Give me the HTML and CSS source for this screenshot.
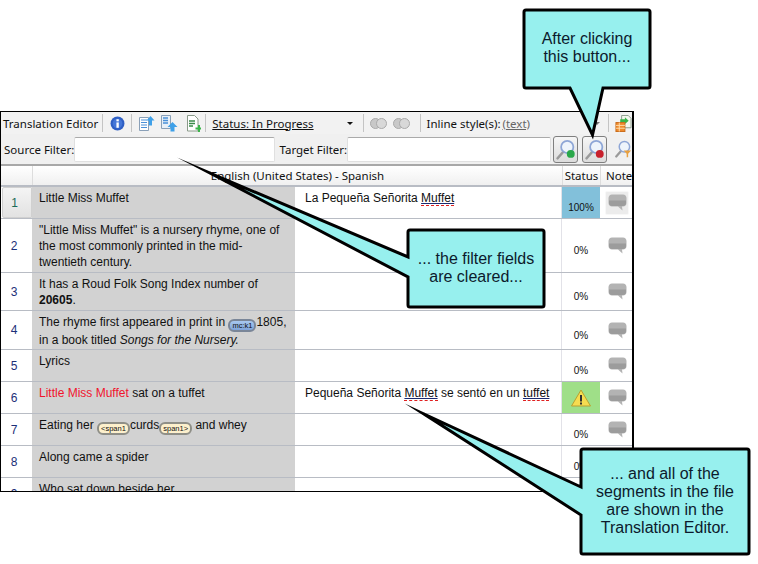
FILE: index.html
```html
<!DOCTYPE html>
<html lang="en">
<head>
<meta charset="utf-8">
<title>Translation Editor</title>
<link rel="stylesheet" href="styles.css">
</head>
<body>
<svg class="defs" width="0" height="0">
  <defs>
    <symbol id="bubble" viewBox="0 0 19 17">
      <path d="M4 0.5h11c2 0 3.5 1.6 3.5 3.6v4.8c0 2-1.5 3.6-3.5 3.6h-1l0.5 4-4.5-4H4c-2 0-3.5-1.6-3.5-3.6V4.1C0.500 2.100 2 0.500 4 0.500z" fill="#b3b3b3"/>
      <path d="M1 6.500h17v2.500c0 2-1.500 3-3 3H4c-1.500 0-3-1-3-3z" fill="#9c9c9c"/>
    </symbol>
    <symbol id="lens" viewBox="0 0 24 24">
      <path d="M3 22l7-8" stroke="#9a9a9a" stroke-width="3" stroke-linecap="round"/>
      <circle cx="14" cy="9" r="7" fill="#eef4fb" stroke="#8ea6d6" stroke-width="2"/>
    </symbol>
  </defs>
</svg>
<main class="stage">
  <section class="window">
    <div class="toolbar">
      <span class="tool-title">Translation Editor</span>
      <span class="sep"></span>
      <svg class="ic info" viewBox="0 0 14 14"><circle cx="7" cy="7" r="6.500" fill="#2f5fc4"/><circle cx="7" cy="7" r="4.500" fill="#4476d8"/><rect x="6" y="6" width="2.200" height="5" fill="#fff"/><rect x="6" y="3" width="2.200" height="2" fill="#fff"/></svg>
      <span class="sep"></span>
      <svg class="ic page a" viewBox="0 0 17 17"><path d="M1.500 2.500h9v13h-9z" fill="#fff" stroke="#8aa0b8"/><path d="M3 5h6M3 7.500h6M3 10h6M3 12.500h6" stroke="#4a90d8"/><path d="M12.500 1l4 4.500h-2.500v5h-3v-5H8.500z" fill="#3fa0e8"/></svg>
      <svg class="ic page b" viewBox="0 0 17 17"><path d="M0.500 0.500h9v13h-9z" fill="#e8f0f8" stroke="#8aa0b8"/><path d="M2 3h5M2 5.500h5M2 8h5" stroke="#4a90d8" stroke-width="1.300"/><path d="M11.500 7l5 5h-3v4.500h-4V12h-3z" fill="#3fa0e8"/></svg>
      <svg class="ic page c" viewBox="0 0 15 17"><path d="M1.500 0.500h7l3.500 3.500v12h-10.500z" fill="#fff" stroke="#8a9a8a"/><path d="M3 6h6M3 8.500h6M3 11h4" stroke="#3a8a4a" stroke-width="1.300"/><path d="M9.500 12.500h2.500v-2.500h2v2.500h1v2h-1v2.500h-2v-2.500H9.500z" fill="#3bb54a"/></svg>
      <span class="sep"></span>
      <span class="status-link">Status: In Progress</span>
      <span class="caret"></span>
      <span class="sep"></span>
      <span class="rings first"><i></i><i></i></span>
      <span class="rings"><i></i><i></i></span>
      <span class="sep"></span>
      <span class="inline-label">Inline style(s):</span>
      <span class="inline-value">(text)</span>
      <span class="caret faint"></span>
      <span class="sep"></span>
      <svg class="ic page d" viewBox="0 0 17 18"><path d="M6.500 0.500h7l3 3v10h-10z" fill="#f4f8f0" stroke="#8a9a8a"/><path d="M5 4.500h5v-2l4 3.500-4 3.500v-2H5z" fill="#3bb54a"/><rect x="0.500" y="8" width="9.500" height="9.500" fill="#f08a2c" stroke="#c86a18"/><path d="M0.500 11h9.500M0.500 14h9.500M4 8v9.500" stroke="#ffe0b0"/></svg>
    </div>
    <div class="filters">
      <label class="filter-label source">Source Filter:</label>
      <span class="field f-source"></span>
      <label class="filter-label target">Target Filter:</label>
      <span class="field f-target"></span>
      <button class="lens-btn"><svg class="lens" viewBox="0 0 24 24"><use href="#lens"/><circle cx="18" cy="17" r="4.500" fill="#2aa84a"/></svg></button>
      <button class="lens-btn second"><svg class="lens" viewBox="0 0 24 24"><use href="#lens"/><circle cx="18" cy="17" r="4.500" fill="#c8202c"/></svg></button>
      <svg class="lens plain" viewBox="0 0 24 24"><use href="#lens"/><path d="M13 14h10l-4 4.500v4.500h-2v-4.500z" fill="#e8a040"/></svg>
    </div>
    <div class="grid">
      <div class="row head">
        <div class="c-num"></div>
        <div class="c-lang">English (United States) - Spanish</div>
        <div class="c-status">Status</div>
        <div class="c-note">Note</div>
      </div>
      <div class="row h32">
        <div class="c-num current">1</div>
        <div class="c-src">Little Miss Muffet</div>
        <div class="c-tgt">La Pequeña Señorita <span class="spell">Muffet</span></div>
        <div class="c-pct blue">100%</div>
        <div class="c-bub"><span class="bub-box"><svg class="bub"><use href="#bubble"/></svg></span></div>
      </div>
      <div class="row h54">
        <div class="c-num">2</div>
        <div class="c-src">"Little Miss Muffet" is a nursery rhyme, one of the most commonly printed in the mid-twentieth century.</div>
        <div class="c-tgt"></div>
        <div class="c-pct">0%</div>
        <div class="c-bub"><svg class="bub"><use href="#bubble"/></svg></div>
      </div>
      <div class="row h38">
        <div class="c-num">3</div>
        <div class="c-src">It has a Roud Folk Song Index number of <b>20605</b>.</div>
        <div class="c-tgt"></div>
        <div class="c-pct">0%</div>
        <div class="c-bub"><svg class="bub"><use href="#bubble"/></svg></div>
      </div>
      <div class="row h39">
        <div class="c-num">4</div>
        <div class="c-src">The rhyme first appeared in print in <span class="tag mc">mc:k1</span>1805, in a book titled <i>Songs for the Nursery.</i></div>
        <div class="c-tgt"></div>
        <div class="c-pct">0%</div>
        <div class="c-bub"><svg class="bub"><use href="#bubble"/></svg></div>
      </div>
      <div class="row h32">
        <div class="c-num">5</div>
        <div class="c-src">Lyrics</div>
        <div class="c-tgt"></div>
        <div class="c-pct">0%</div>
        <div class="c-bub"><svg class="bub"><use href="#bubble"/></svg></div>
      </div>
      <div class="row h32">
        <div class="c-num">6</div>
        <div class="c-src"><span class="red">Little Miss Muffet</span> sat on a tuffet</div>
        <div class="c-tgt">Pequeña Señorita <span class="spell">Muffet</span> se sentó en un <span class="spell">tuffet</span></div>
        <div class="c-pct green"><svg class="warn" viewBox="0 0 20 18"><path d="M10 1L19.500 17H0.500z" fill="#f6dc50" stroke="#b8a030"/><rect x="9" y="6" width="2" height="6.500" fill="#333"/><rect x="9" y="13.500" width="2" height="2" fill="#333"/></svg></div>
        <div class="c-bub"><svg class="bub"><use href="#bubble"/></svg></div>
      </div>
      <div class="row h32">
        <div class="c-num">7</div>
        <div class="c-src">Eating her <span class="tag span">&lt;span1</span>curds<span class="tag span">span1&gt;</span> and whey</div>
        <div class="c-tgt"></div>
        <div class="c-pct">0%</div>
        <div class="c-bub"><svg class="bub"><use href="#bubble"/></svg></div>
      </div>
      <div class="row h32">
        <div class="c-num">8</div>
        <div class="c-src">Along came a spider</div>
        <div class="c-tgt"></div>
        <div class="c-pct">0%</div>
        <div class="c-bub"></div>
      </div>
      <div class="row h32">
        <div class="c-num">9</div>
        <div class="c-src">Who sat down beside her</div>
        <div class="c-tgt"></div>
        <div class="c-pct">0%</div>
        <div class="c-bub"></div>
      </div>
    </div>
  </section>

  <svg class="callouts" viewBox="0 0 758 564" width="758" height="564">
    <path class="shape" d="M526 10H648a2 2 0 0 1 2 2V86a2 2 0 0 1-2 2H603L592.500 135 570 88H526a2 2 0 0 1-2-2V12a2 2 0 0 1 2-2z"/>
    <path class="shape" d="M410 230H542a2 2 0 0 1 2 2V305a2 2 0 0 1-2 2H410a2 2 0 0 1-2-2V277L210 173 408 257V232a2 2 0 0 1 2-2z"/>
    <path class="shape" d="M583 449H747a2 2 0 0 1 2 2V552a2 2 0 0 1-2 2H583a2 2 0 0 1-2-2V515L424 414 581 487V451a2 2 0 0 1 2-2z"/>
  </svg>
  <p class="note n1">After clicking<br>this button...</p>
  <p class="note n2">... the filter fields<br>are cleared...</p>
  <p class="note n3">... and all of the<br>segments in the file<br>are shown in the<br>Translation Editor.</p>
</main>
</body>
</html>
```
FILE: styles.css
```css
* { box-sizing: border-box; }
html, body { margin: 0; padding: 0; background: #fff; }
.defs { position: absolute; }
.stage { position: relative; width: 758px; height: 564px; overflow: hidden; font-family: "Liberation Sans", Arial, sans-serif; }

.window {
  position: absolute; left: 0; top: 111px; width: 634px; height: 381px;
  border: 1px solid #000; border-left-width: 1px; border-right-width: 2px;
  background: #fff; overflow: hidden;
}

.toolbar {
  display: flex; align-items: center; height: 22px; padding-left: 2px;
  background: #f2f2f2;
  font-family: "Noto Sans", sans-serif; font-size: 11.500px; color: #111;
}
.tool-title { width: 96px; white-space: nowrap; }
.sep { width: 1px; height: 18px; background: #c4c4c4; margin: 0 6px 0 4px; flex: none; }
.ic { display: block; flex: none; }
.info { width: 15px; height: 15px; margin: 0 2px 0 1px; }
.page { width: 17px; height: 17px; }
.page.a { margin-right: 6px; }
.page.b { margin-right: 8px; }
.page.c { width: 15px; }
.status-link { width: 130px; text-decoration: underline; white-space: nowrap; }
.caret { width: 0; height: 0; border: 3px solid transparent; border-top: 3px solid #111; border-bottom: 0; margin: 0 6px 0 11px; flex: none; }
.caret.faint { margin: 0 4px 0 64px; border-top-color: #777; }
.rings { display: flex; width: 17px; margin-right: 6px; }
.rings i { width: 11px; height: 11px; border-radius: 50%; background: #c8c8c8; border: 1px solid #aaa; flex: none; }
.rings i + i { margin-left: -5px; background: #d8d8d8; }
.inline-label { width: 80px; white-space: nowrap; }
.inline-value { color: #666; text-decoration: underline; width: 28px; white-space: nowrap; }

.filters {
  display: flex; align-items: center; height: 32px; padding-left: 3px;
  background: #f0f0f0; border-bottom: 2px solid #a8a8a8;
  font-family: "Noto Sans", sans-serif; font-size: 11.500px; color: #111;
}
.filter-label { white-space: nowrap; }
.filter-label.source { width: 71px; }
.filter-label.target { width: 68px; margin-left: 4px; }
.field { height: 25px; background: #fff; border: 1px solid #e0e0e0; border-top-color: #aaa; border-radius: 2px; flex: none; }
.f-source { width: 201px; }
.f-target { width: 204px; margin-right: 1px; }
.lens-btn { width: 25px; height: 27px; padding: 1px; margin-left: 1px; background: linear-gradient(#f6f6f6, #dcdcdc); border: 1px solid #7f7f7f; border-radius: 3px; display: flex; align-items: center; justify-content: center; }
.lens-btn.second { margin-left: 4px; }
.lens { width: 21px; height: 21px; display: block; }
.lens.plain { margin-left: 7px; width: 18px; height: 18px; }

.grid { font-size: 12px; line-height: 16px; color: #111; }
.row { display: grid; grid-template-columns: 31px 265px 265px 38px 34px; border-bottom: 1px solid #b8bcc4; }
.h32 { height: 32px; }
.h38 { height: 38px; }
.h39 { height: 39px; }
.h54 { height: 54px; }
.row.head { height: 21px; grid-template-columns: 31px 530px 38px 34px; border-bottom: 2px solid #b8bcc4; background: linear-gradient(#fff, #f0f0f0); font-family: "Noto Sans", sans-serif; font-size: 11.500px; }
.head > div { display: flex; align-items: center; justify-content: center; border-left: 1px solid #ddd; }
.head .c-num { border-left: 0; }
.head .c-note { justify-content: flex-start; padding-left: 5px; white-space: nowrap; overflow: hidden; }

.c-num { display: flex; align-items: center; justify-content: center; color: #1c2f78; font-size: 12px; padding-right: 5px; }
.c-num.current { color: #1a6a58; background: linear-gradient(#f4f4f4, #e2e2e2); border: 1px solid #d0d0d0; border-radius: 2px 0 0 2px; margin-left: 1px; }
.c-src { background: #d2d2d2; padding: 3px 6px 0 7px; border-right: 2px solid #fff; overflow: hidden; }
.c-tgt { padding: 3px 6px 0 8px; white-space: nowrap; border-right: 1px solid #e2e2e8; }
.c-pct { display: flex; align-items: center; justify-content: center; padding-top: 11px; font-size: 10px; }
.c-pct.blue { background: #82c0da; }
.c-pct.green { background: #9fdf88; padding-top: 0; }
.c-bub { display: flex; align-items: center; justify-content: center; }
.bub-box { width: 24px; height: 24px; display: flex; align-items: center; justify-content: center; background: #ececec; border: 1px solid #f8f8f8; border-radius: 2px; }
.bub { width: 19px; height: 17px; display: block; }
.warn { width: 20px; height: 18px; display: block; }
.red { color: #f0142c; }
.spell { text-decoration: underline; text-decoration-color: #1a2a70; border-bottom: 1px dashed #e02020; }
.tag { display: inline-block; height: 13px; line-height: 10px; font-size: 7.500px; padding: 0 2px; border: 2px solid #8a8a8a; border-radius: 6px; vertical-align: -2px; white-space: nowrap; }
.tag.mc { background: linear-gradient(#a8c8f0, #7ea4dc); border-color: #7a8698; }
.tag.span { background: #fdf0cc; border-color: #8f8f87; }

.callouts { position: absolute; left: 0; top: 0; }
.shape { fill: #97f0ee; stroke: #000; stroke-width: 3px; stroke-linejoin: miter; stroke-miterlimit: 80; }
.note { position: absolute; margin: 0; text-align: center; font-size: 16px; line-height: 18px; color: #0c1a2c; white-space: nowrap; }
.n1 { left: 524px; width: 126px; top: 30px; }
.n2 { left: 408px; width: 136px; top: 250px; }
.n3 { left: 581px; width: 168px; top: 465px; }
```
